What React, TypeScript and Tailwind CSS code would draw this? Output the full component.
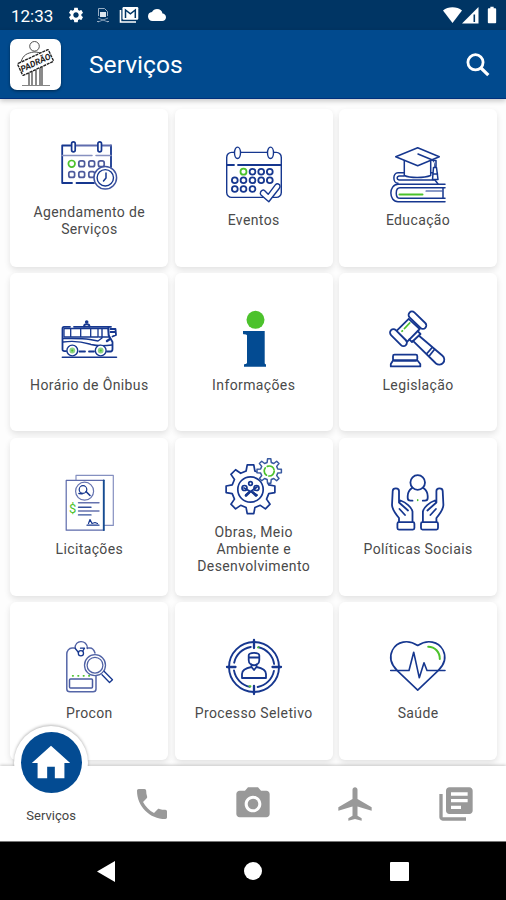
import type { ReactNode } from "react";
import {
  MdBatteryFull,
  MdCloud,
  MdHome,
  MdLibraryBooks,
  MdLocalAirport,
  MdPhone,
  MdPhotoCamera,
  MdSettings,
} from "react-icons/md";

const BLUE = "#16378f";
const GREEN = "#4cc22c";

function Glyph({ children, width = 1.5 }: { children: ReactNode; width?: number }) {
  return (
    <svg
      viewBox="0 0 56 56"
      className="size-14 shrink-0 overflow-visible"
      fill="none"
      stroke={BLUE}
      strokeWidth={width}
      strokeLinecap="round"
      strokeLinejoin="round"
    >
      {children}
    </svg>
  );
}

function gearPath(cx: number, cy: number, outer: number, inner: number, teeth: number) {
  const step = (Math.PI * 2) / teeth;
  const offsets: [number, number][] = [
    [-0.3, inner],
    [-0.17, outer],
    [0.17, outer],
    [0.3, inner],
  ];
  const points: string[] = [];
  for (let i = 0; i < teeth; i++) {
    for (const [o, r] of offsets) {
      const a = (i + o) * step - Math.PI / 2;
      points.push(`${(cx + r * Math.cos(a)).toFixed(2)} ${(cy + r * Math.sin(a)).toFixed(2)}`);
    }
  }
  return `M${points.join("L")}Z`;
}

const ScheduleIcon = () => (
  <Glyph>
    <path d="M9.5 6.5H1.2V44H11M50 6.5V28M15.5 44H33" strokeWidth="1.8" />
    <path d="M15 6.5H36M41 6.5H50" stroke="#5f6cae" strokeWidth="1.8" />
    <path d="M1 16.5H31M35 16.5H50" stroke="#8791c0" />
    <rect x="10.6" y="2.8" width="3.6" height="10" rx="1.8" fill="#fff" strokeWidth="1.7" />
    <rect x="36.9" y="2.8" width="3.6" height="10" rx="1.8" fill="#fff" strokeWidth="1.7" />
    <circle cx="10.7" cy="24.8" r="3.3" stroke={GREEN} strokeWidth="1.7" />
    {[20.7, 30.7, 40.3].map((x) => (
      <rect key={x} x={x - 2.9} y="21.9" width="5.8" height="5.8" rx="2" stroke="#4d5a9c" strokeWidth="1.7" />
    ))}
    {[10.7, 20.7, 30.7].map((x) => (
      <rect key={x} x={x - 2.9} y="32.6" width="5.8" height="5.8" rx="2" stroke="#4d5a9c" strokeWidth="1.7" />
    ))}
    <circle cx="44.3" cy="38.8" r="11.3" fill="#fff" stroke="#3f54a0" />
    <circle cx="44.3" cy="38.8" r="8.2" strokeWidth="1.4" />
    <path d="M45 34V39L42.5 42" />
  </Glyph>
);

const EventsIcon = () => (
  <Glyph width={1.4}>
    <rect x="0.7" y="5.4" width="54.6" height="45" rx="5" />
    <path d="M1 18H8M12 18H55" strokeWidth="1.8" />
    <ellipse cx="11.5" cy="5.8" rx="3" ry="5.7" fill="#fff" />
    <ellipse cx="44.5" cy="5.8" rx="3" ry="5.7" fill="#fff" />
    <circle cx="17.5" cy="24.7" r="3" stroke={GREEN} strokeWidth="1.8" />
    {[26.5, 35.2, 43.8].map((x) => (
      <circle key={x} cx={x} cy="24.7" r="2.9" strokeWidth="1.8" />
    ))}
    {[8.8, 17.5, 26.5, 35.2, 43.8].map((x) => (
      <circle key={x} cx={x} cy="33.3" r="2.9" strokeWidth="1.8" />
    ))}
    {[8.8, 17.5, 26.5].map((x) => (
      <circle key={x} cx={x} cy="42" r="2.9" strokeWidth="1.8" />
    ))}
    <path
      d="M34.5 45.3C35 43.5 37 42.3 38.5 43.5L42.2 47.3L49.5 37.7C51 36 54 37 54 39.2C54 40 53.7 40.8 53 41.7L42.8 54.7L35 48C34.3 47.2 34.1 46.2 34.5 45.3Z"
      fill="#fff"
    />
  </Glyph>
);

const EducationIcon = () => (
  <Glyph width={1.5}>
    <path d="M14.5 25.7H8C2.5 25.7 2.5 36.3 8 36.3M14 29H9C6.5 29.5 6.5 32.7 9 33H44M41 25.7H47M45 33L48 37" />
    <path d="M55 37.3H8C-1.5 37.5 -1.5 54.7 8 54.7H55M55 40.8H10C5 41 5 51.3 10 51.3H55M53 41V51" />
    <path d="M36 44H52" strokeWidth="1.1" />
    <path d="M14.3 13.5V28.5C20 31.2 34 31.2 40.7 28.5V13.5" fill="#fff" />
    <path d="M5.7 9.7L27.7 0.7L49.3 9.7L27.7 18.7Z" fill="#fff" />
    <path d="M28 7L42.5 13C44.3 14 45 15 45 17V20" />
    <path d="M43.5 13.5H46V20M43.5 20.5H46.5L48 32.5H42.5Z" fill="#fff" />
    <path d="M43 27H47.5" />
    <path d="M9.5 47.5H32.5" stroke={GREEN} strokeWidth="2" />
  </Glyph>
);

const BusIcon = () => (
  <Glyph width={1.8}>
    <path d="M9 14.8H3C2 14.8 1.5 15.5 1.5 16.5V37.5C1.5 38.8 2 39.2 5 39.2M13 14.8H50M18.5 39.5H24M28 39.5H33" />
    <path d="M46 39.5H49.5C51 39.5 51.5 38.5 51.5 37V30L47.5 23V15" />
    <path d="M3 16.5H37V25H3ZM9.7 16.5V25M19.7 16.5V25M29.7 16.5V25M37 16.5H47L48 25H38" strokeWidth="1.3" />
    <path d="M41 17V26L37 29L29 27.5C20 26 10 26.5 2 26.5M2 30C18 28 25 31 30 32.5C36 34 43 34 51 33" strokeWidth="1.4" />
    <path d="M23 14.5C23 11.5 28.5 11.5 28.5 14.5" />
    <circle cx="25.7" cy="10" r="0.9" />
    <path d="M49.5 17H54.5L55 23L51.5 24.5M49.5 20H54" />
    <path d="M46 29L49 27" strokeWidth="2.4" />
    {[11.3, 39.7].map((x) => (
      <g key={x}>
        <circle cx={x} cy="38.5" r="5.4" fill="#fff" strokeWidth="1.4" />
        <circle cx={x} cy="38.5" r="2" fill={GREEN} stroke="#8fd487" />
      </g>
    ))}
    <path d="M1.3 45.2H55.5" strokeWidth="1.5" />
  </Glyph>
);

const InfoIcon = () => (
  <Glyph>
    <circle cx="29.5" cy="7.8" r="9" fill={GREEN} stroke="none" />
    <path
      d="M17 19H38.7V51.2C38.7 52 40 51.7 40 53V54.7H18V53C18 51.7 21 52 21 51V23.5C21 22 17 22.8 17 21.5Z"
      fill="#034b92"
      stroke="none"
    />
  </Glyph>
);

const GavelIcon = () => (
  <Glyph width={1.8}>
    <path d="M18.7 6.8L6.3 19.2L17.3 29.7L29.7 17Z" />
    <path d="M27.7 19.2L30.5 22L22 30L19.3 27.3" />
    <path d="M29 23.8L52.5 43.8A4.8 4.8 0 0 1 46 51.5L23 28.8M41.7 36L36.5 42M44 38L39 44.2" />
    <rect x="-7.9" y="-3.4" width="22" height="6.8" rx="3.4" transform="translate(25.2 6) rotate(44)" fill="#fff" />
    <rect x="-7.9" y="-3.4" width="21" height="6.8" rx="3.4" transform="translate(6.6 23.8) rotate(45)" fill="#fff" />
    <rect x="3" y="42.7" width="24.3" height="5.8" rx="1.5" />
    <path d="M3 48.5H27.5L30.3 52V54.4H0.8V52Z" />
    <path d="M12 19.2L12.4 18.8M14.5 16.5L19.7 11" stroke={GREEN} />
  </Glyph>
);

const BiddingIcon = () => (
  <Glyph width={1.2}>
    <path d="M15 4V-0.6H52.3V49.4H43.5" stroke="#8590c0" />
    <path d="M43 4.4H5.2V54.2H43" stroke="#5c6aaa" />
    <path d="M42.8 4.5V54" strokeWidth="1.9" stroke="#164c92" />
    <circle cx="23.6" cy="15.2" r="9" stroke="#6573b0" />
    <circle cx="22" cy="13.5" r="3.8" />
    <path d="M18 17.5L21 17.8M25 15.5L29 19.5" strokeWidth="1.6" />
    <path d="M17.5 26.7H38M17.5 35H38" stroke="#6572ae" strokeWidth="1.4" />
    <path d="M17.5 31.2H30M17.5 38.9H30" stroke="#34519b" strokeWidth="1.4" />
    <path d="M26 49.2H38M27.5 47.5L29 43.5L31 47.5L34 46.5L36.5 47.5" />
    <text x="7.9" y="37.2" fill={GREEN} stroke="none" className="font-['Roboto',sans-serif] text-[13px]">
      $
    </text>
  </Glyph>
);

const WorksIcon = () => (
  <Glyph width={1.7}>
    <path d={gearPath(24.5, 30.3, 24.6, 18.8, 8)} />
    <circle cx="24.5" cy="30.5" r="12.7" />
    <path d="M18 29L31 36M20 36L31 28" strokeWidth="1.8" />
    <circle cx="18.5" cy="29" r="2.5" />
    <circle cx="30.5" cy="29" r="2.5" />
    <circle cx="24.5" cy="24.5" r="1.8" />
    <path d="M20 36.5L23 33.5M30 36.5L27 33.5" strokeWidth="2.6" />
    <circle cx="43.2" cy="12" r="12.5" fill="#fff" stroke="none" />
    <path d={gearPath(43.2, 12, 12.3, 8.8, 8)} stroke="#3859a0" strokeWidth="1.5" fill="#fff" />
    <circle cx="43.2" cy="12" r="5" stroke={GREEN} strokeWidth="1.7" strokeDasharray="8 2.5" />
  </Glyph>
);

const Hand = () => (
  <>
    <path d="M9 46V42C4 36 2 33 2 29L2.7 15C2.8 11.5 9 11.5 9 15V26.5L18 34.5M9 26.5L10.5 24.5C16 26.5 21.5 31 22.5 35.5V46" />
    <path d="M9.5 33L15 39" />
    <rect x="7.4" y="46.2" width="17" height="7.4" rx="1.5" />
  </>
);

const SocialIcon = () => (
  <Glyph width={1.8}>
    <Hand />
    <g transform="translate(55.4 0) scale(-1 1)">
      <Hand />
    </g>
    <circle cx="27.7" cy="6.5" r="7.3" />
    <path d="M22 12C19.3 14 17.7 16.5 17.7 20V22C17.7 24 18.8 24.7 20.5 24.7H22.5M33.4 12C36.1 14 37.7 16.5 37.7 20V22C37.7 24 36.6 24.7 34.9 24.7H32.8" />
    <path d="M27.7 23.8V24.5" stroke={GREEN} strokeWidth="1.5" />
  </Glyph>
);

const ProconIcon = () => (
  <Glyph width={1.3}>
    <path d="M14 8H11C8 8 5.8 11 5.8 14V49C5.8 51 6.7 51.8 9 51.8H32C34.2 51.8 35 51 35 49V36M26 8H29C31 8 33 10 34 13" stroke="#5566a8" strokeWidth="1.5" />
    <path d="M14.3 8.5C13 -0.5 26.5 -1 26.5 8.5" stroke="#4a5ba0" />
    <path d="M14.3 8.5L17.5 12.5M19.5 8.2H23.5L21.8 11" />
    <circle cx="19.9" cy="13.2" r="2.6" />
    <path d="M11.7 35.8H29" stroke={GREEN} strokeWidth="1.8" strokeDasharray="0.4 5" />
    <rect x="8.5" y="38.9" width="23" height="9.2" rx="1" stroke="#4a5ba0" strokeWidth="1.5" />
    <circle cx="34" cy="25.2" r="10.5" fill="#fff" stroke="#5062a5" />
    <circle cx="34" cy="25.2" r="7.9" stroke="#5062a5" />
    <path d="M41 34.7L48.5 42.5L51.5 39.8L43.3 31.5" fill="#fff" />
  </Glyph>
);

const SelectionIcon = () => (
  <Glyph width={1.9}>
    <circle cx="28" cy="27" r="25" />
    <circle cx="28" cy="27" r="20.3" strokeDasharray="23.9 8" strokeDashoffset="-4" />
    <path d="M1 27H9.5M46.5 27H55M28 0V8M28 46V54" strokeWidth="2.3" />
    <path d="M22.7 15.5C22.7 12 33.3 12 33.3 15.5V20C33.3 27 22.7 27 22.7 20ZM22.7 17.5H33.3" strokeWidth="1.8" />
    <path d="M25.5 24.5V27C20 28 16 29.5 16 34V38H40V34C40 29.5 36 28 30.5 27V24.5M25.5 27L28 30L30.5 27" strokeWidth="1.8" />
    <path d="M23.5 46.2H24.5M32 7.4H32.5" stroke={GREEN} />
  </Glyph>
);

const HealthIcon = () => (
  <Glyph width={1.6}>
    <path d="M27.7 5.5C18 -1 7 1.5 2.5 10C-1.5 18 2 25.5 7.5 30.8L27.7 50.2L47.9 30.8C53.5 25.5 57 18 53 10C48.5 1.5 37.4 -1 27.7 5.5Z" />
    <path d="M0.7 30.5H19L23.7 12.2L29.3 37.8L34 22.8L37 30.5H55" />
    <path d="M38.2 6.8C45 6.8 49.8 12 49.8 19" stroke={GREEN} strokeWidth="2" />
  </Glyph>
);

const services: { lines: string[]; icon: ReactNode }[] = [
  { lines: ["Agendamento de", "Serviços"], icon: <ScheduleIcon /> },
  { lines: ["Eventos"], icon: <EventsIcon /> },
  { lines: ["Educação"], icon: <EducationIcon /> },
  { lines: ["Horário de Ônibus"], icon: <BusIcon /> },
  { lines: ["Informações"], icon: <InfoIcon /> },
  { lines: ["Legislação"], icon: <GavelIcon /> },
  { lines: ["Licitações"], icon: <BiddingIcon /> },
  { lines: ["Obras, Meio", "Ambiente e", "Desenvolvimento"], icon: <WorksIcon /> },
  { lines: ["Políticas Sociais"], icon: <SocialIcon /> },
  { lines: ["Procon"], icon: <ProconIcon /> },
  { lines: ["Processo Seletivo"], icon: <SelectionIcon /> },
  { lines: ["Saúde"], icon: <HealthIcon /> },
];

function StatusBar() {
  return (
    <div className="flex h-[30px] shrink-0 items-center bg-[#003564] pr-[4px] pl-[11px] text-white">
      <span className="w-[43px] pt-[3px] text-[17px] leading-none">12:33</span>
      <MdSettings className="ml-[13px] size-[18px]" />
      <svg viewBox="0 0 16 18" className="ml-[10px] h-[18px] w-4" fill="none" stroke="#98aec4">
        <path d="M3.5 10V2.5H9.5L12.5 5.5V10M2 15.5H4M12 15.5H14" />
        <path d="M5 6H11V11H5Z" fill="#dbe5ee" stroke="none" />
        <path d="M3 12L13 16M13 12L3 16" strokeWidth="0.8" />
      </svg>
      <svg viewBox="0 0 20 18" className="ml-[8px] h-[18px] w-5" fill="none">
        <path d="M1.5 4V16H17" stroke="#fff" strokeWidth="1.6" />
        <rect x="3.5" y="1" width="15.8" height="12.7" rx="1.2" fill="#fff" />
        <path d="M6.5 12V4L11.4 7.8L16.3 4V12" stroke="#003564" strokeWidth="1.5" />
      </svg>
      <MdCloud className="ml-[9px] size-[18px]" />
      <div className="ml-auto flex items-center">
        <svg viewBox="0 0 19 16" className="h-4 w-[19px]">
          <path d="M0 3.5C5-.9 14-.9 19 3.5L9.5 16Z" fill="#fff" />
        </svg>
        <svg viewBox="0 0 17 17" className="h-[17px] w-[17px]">
          <path d="M0 16.5L16.5 0V16.5Z" fill="#fff" />
          <path d="M12.3 7.5V15" stroke="#003564" strokeWidth="1.6" />
        </svg>
        <MdBatteryFull className="ml-[3px] size-5" />
      </div>
    </div>
  );
}

function Logo() {
  return (
    <div className="flex size-[51px] items-center justify-center rounded-[7px] bg-white shadow-[0_1px_3px_rgba(0,0,0,0.45)]">
      <svg viewBox="0 0 51 51" className="size-[51px]" fill="none" stroke="#3d3d3d" strokeWidth="0.9">
        <circle cx="24.5" cy="7.3" r="4.8" />
        <path d="M11 23C13 16 17 14 24 13C30 13 33 15 36 20" />
        <path d="M19 30V46M22 30V46M26 29V46M30 28V46M32 28V46" strokeWidth="1.2" />
        <path d="M12 46.5H40" stroke="#777" />
        <g transform="translate(25.5 23.5) rotate(-25)">
          <rect x="-17" y="-6.5" width="34" height="13" rx="1" fill="#fff" stroke="#222" strokeDasharray="3 0.8" strokeWidth="1.4" />
          <text
            x="0"
            y="3.2"
            textAnchor="middle"
            fill="#222"
            stroke="none"
            className="font-['Roboto',sans-serif] text-[8.5px] font-bold italic"
          >
            PADRÃO
          </text>
        </g>
      </svg>
    </div>
  );
}

function Header() {
  return (
    <header className="relative z-10 flex h-[69px] shrink-0 items-center border-b border-[#00307c] bg-[#014a8e] pr-[16px] pl-[10px] text-white shadow-[0_2px_5px_rgba(0,0,0,0.22)]">
      <Logo />
      <h1 className="ml-[28px] pt-[2px] text-[24.6px] leading-none">Serviços</h1>
      <svg viewBox="0 0 24 24" className="mt-[2px] ml-auto size-6" fill="none" stroke="#fff">
        <circle cx="9.5" cy="9.3" r="7.6" strokeWidth="2.8" />
        <path d="M15 15L22.3 22.2" strokeWidth="3.2" />
      </svg>
    </header>
  );
}

function BottomNav() {
  return (
    <nav className="relative z-10 grid h-[76px] shrink-0 grid-cols-5 border-b border-[#777] bg-white shadow-[0_-1px_3px_rgba(0,0,0,0.2)]">
      <div className="relative flex items-end justify-center pb-[16px] pl-px">
        <div className="absolute -top-[40px] left-[14px] size-[74px] rounded-full bg-white shadow-[0_-1px_3px_rgba(0,0,0,0.28)]" />
        <div className="absolute top-0 left-[12px] h-[38px] w-[78px] bg-white" />
        <div className="absolute -top-[34px] left-[20.5px] flex size-[61px] items-center justify-center rounded-full bg-[#034b92]">
          <MdHome className="size-[46px] text-white" />
        </div>
        <span className="relative text-[13px] leading-[18px] text-[#444]">Serviços</span>
      </div>
      {[MdPhone, MdPhotoCamera, MdLocalAirport, MdLibraryBooks].map((Icon, i) => (
        <div key={i} className="flex items-center justify-center pt-px pl-px text-[#999]">
          <Icon className="size-10" />
        </div>
      ))}
    </nav>
  );
}

function SystemNav() {
  return (
    <div className="flex h-[58px] shrink-0 items-center justify-between bg-black pr-[97px] pl-[97px]">
      <svg viewBox="0 0 18 21" className="h-[21px] w-[18px]">
        <path d="M0 10.5L18 0V21Z" fill="#fff" />
      </svg>
      <span className="size-[18px] rounded-full bg-white" />
      <span className="size-[19px] rounded-[1px] bg-white" />
    </div>
  );
}

export default function App() {
  return (
    <div className="flex h-[900px] w-[506px] flex-col overflow-hidden bg-[#fdfdfd] font-['Roboto',sans-serif]">
      <StatusBar />
      <Header />
      <main className="grid min-h-0 flex-1 auto-rows-[158px] grid-cols-3 gap-x-[6.5px] gap-y-[6.4px] overflow-hidden pt-[10px] pr-[9px] pl-[10.4px]">
        {services.map(({ lines, icon }) => (
          <div
            key={lines.join(" ")}
            className="flex flex-col items-center justify-center gap-2 rounded-[6px] bg-white shadow-[0_3px_6px_rgba(0,0,0,0.11)]"
          >
            {icon}
            <div className="relative top-px text-center text-[14px] leading-[17.4px] tracking-[0.38px] text-[#4a4a4a]">
              {lines.map((line) => (
                <div key={line}>{line}</div>
              ))}
            </div>
          </div>
        ))}
      </main>
      <BottomNav />
      <SystemNav />
    </div>
  );
}
